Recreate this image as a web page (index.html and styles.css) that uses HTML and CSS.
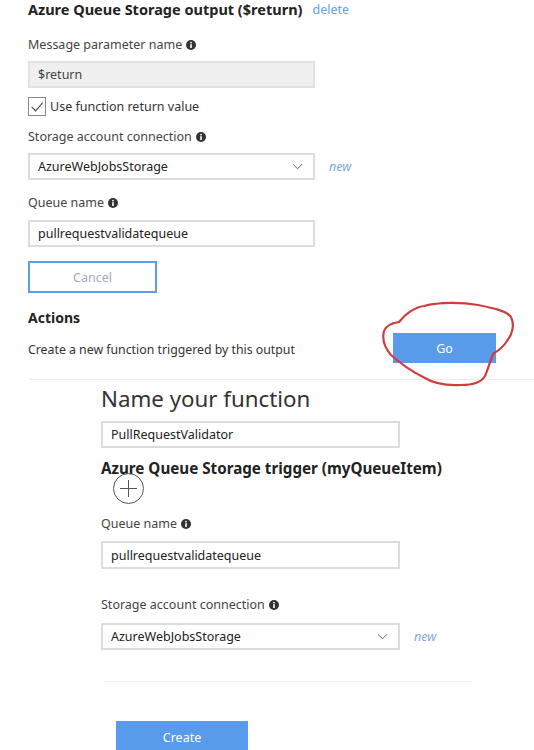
FILE: index.html
```html
<!DOCTYPE html>
<html>
<head>
<meta charset="utf-8">
<link rel="stylesheet" href="styles.css">
</head>
<body>
<section class="output">
  <div class="head"><h2 class="title">Azure Queue Storage output ($return)</h2><a class="link del">delete</a></div>
  <div class="lbl l-msg">Message parameter name <svg class="info" viewBox="0 0 10 10"><circle cx="5" cy="5" r="5" fill="#333"/><rect x="4.2" y="4.2" width="1.6" height="3.8" fill="#fff"/><circle cx="5" cy="2.6" r="0.9" fill="#fff"/></svg></div>
  <div class="field disabled f-msg">$return</div>
  <div class="check"><span class="box"><svg viewBox="0 0 18 19"><path d="M3 10 L7.5 14.5 L15.5 5" fill="none" stroke="#444" stroke-width="1.2"/></svg></span>Use function return value</div>
  <div class="lbl l-conn">Storage account connection <svg class="info" viewBox="0 0 10 10"><circle cx="5" cy="5" r="5" fill="#333"/><rect x="4.2" y="4.2" width="1.6" height="3.8" fill="#fff"/><circle cx="5" cy="2.6" r="0.9" fill="#fff"/></svg></div>
  <div class="selrow s-top">
    <div class="field select">AzureWebJobsStorage<svg class="chev" viewBox="0 0 12 7"><path d="M1 1 L6 6 L11 1" fill="none" stroke="#555" stroke-width="1"/></svg></div>
    <a class="link new">new</a>
  </div>
  <div class="lbl l-queue">Queue name <svg class="info" viewBox="0 0 10 10"><circle cx="5" cy="5" r="5" fill="#333"/><rect x="4.2" y="4.2" width="1.6" height="3.8" fill="#fff"/><circle cx="5" cy="2.6" r="0.9" fill="#fff"/></svg></div>
  <div class="field f-queue">pullrequestvalidatequeue</div>
  <button class="cancel">Cancel</button>
  <h3 class="actions">Actions</h3>
  <div class="actrow">
    <span class="acttext">Create a new function triggered by this output</span>
    <span class="gowrap">
      <button class="btn go">Go</button>
      <svg class="scribble" viewBox="0 0 150 100"><path d="M18 25 C24 17 34 10 43 9 C58 5 80 5 97 8 C112 11 126 14 130 20 C134 28 131 38 126 44 C122 50 117 54 113 56 C110 60 108 70 104 79 C100 86 92 88 80 88 C66 89 52 86 42 80 C32 75 20 67 10 58 C3 50 1 42 3 34 C5 28 11 26 18 25 Z" fill="none" stroke="#cf3d3d" stroke-width="2.2" stroke-linejoin="round"/></svg>
    </span>
  </div>
  <hr class="rule top-rule">
</section>
<section class="create">
  <h1 class="name">Name your function</h1>
  <div class="field wide f-name">PullRequestValidator</div>
  <h2 class="title trig">Azure Queue Storage trigger (myQueueItem)</h2>
  <div class="plus"><svg viewBox="0 0 31 31"><circle cx="15.5" cy="15.5" r="15" fill="none" stroke="#555" stroke-width="1"/><path d="M15.5 7 V24 M7 15.5 H24" stroke="#555" stroke-width="1"/></svg></div>
  <div class="lbl l-q2">Queue name <svg class="info" viewBox="0 0 10 10"><circle cx="5" cy="5" r="5" fill="#333"/><rect x="4.2" y="4.2" width="1.6" height="3.8" fill="#fff"/><circle cx="5" cy="2.6" r="0.9" fill="#fff"/></svg></div>
  <div class="field wide f-q2">pullrequestvalidatequeue</div>
  <div class="lbl l-c2">Storage account connection <svg class="info" viewBox="0 0 10 10"><circle cx="5" cy="5" r="5" fill="#333"/><rect x="4.2" y="4.2" width="1.6" height="3.8" fill="#fff"/><circle cx="5" cy="2.6" r="0.9" fill="#fff"/></svg></div>
  <div class="selrow s-bot">
    <div class="field select wide">AzureWebJobsStorage<svg class="chev" viewBox="0 0 12 7"><path d="M1 1 L6 6 L11 1" fill="none" stroke="#555" stroke-width="1"/></svg></div>
    <a class="link new">new</a>
  </div>
  <hr class="rule bot-rule">
  <button class="btn createbtn">Create</button>
</section>
</body>
</html>
```
FILE: styles.css
```css
html, body {
  margin: 0;
  padding: 0;
  background: #fff;
}
body {
  font-family: "Noto Sans", "Open Sans", sans-serif;
  font-size: 12.5px;
  color: #333;
  width: 534px;
  height: 750px;
  overflow: hidden;
}
.output {
  padding-left: 28px;
}
.head {
  display: flex;
  align-items: center;
  height: 18px;
  gap: 10px;
}
.title {
  margin: 0;
  font-size: 14.5px;
  font-weight: 700;
  line-height: 18px;
  color: #222;
}
.link {
  color: #6aa0dc;
  font-size: 12.5px;
}
.lbl {
  display: flex;
  align-items: center;
  gap: 4px;
  height: 18px;
  line-height: 18px;
  color: #444;
}
.info {
  width: 10px;
  height: 10px;
}
.field {
  box-sizing: border-box;
  width: 287px;
  height: 27px;
  border: 2px solid #dcdcdc;
  padding: 0 8px;
  display: flex;
  align-items: center;
  color: #222;
}
.field.wide {
  width: 299px;
}
.disabled {
  background: #efefef;
  border-color: #e2e2e2;
  color: #444;
}
.l-msg { margin-top: 18px; }
.f-msg { margin-top: 7px; }
.check {
  margin-top: 9px;
  display: flex;
  align-items: center;
  gap: 4px;
  height: 19px;
  color: #333;
}
.box {
  box-sizing: border-box;
  width: 18px;
  height: 19px;
  border: 1px solid #8a8a8a;
  display: flex;
}
.box svg {
  width: 16px;
  height: 17px;
}
.l-conn { margin-top: 12px; }
.selrow {
  display: flex;
  align-items: center;
  gap: 14px;
}
.s-top { margin-top: 7px; }
.select {
  justify-content: space-between;
}
.chev {
  width: 11px;
  height: 7px;
  margin-right: 2px;
}
.new {
  font-style: italic;
  color: #7ea8da;
}
.l-queue { margin-top: 14px; }
.f-queue { margin-top: 8px; }
.cancel {
  display: block;
  margin-top: 14px;
  box-sizing: border-box;
  width: 129px;
  height: 32px;
  background: #fff;
  border: 2px solid #5c9ce8;
  font-family: inherit;
  font-size: 12.5px;
  color: #a3abb9;
  padding: 0;
}
.actions {
  margin: 16px 0 0;
  font-size: 14px;
  font-weight: 700;
  line-height: 18px;
  color: #222;
}
.actrow {
  margin-top: 6px;
  width: 468px;
  height: 30px;
  display: flex;
  align-items: center;
  justify-content: space-between;
}
.acttext {
  padding-top: 3px;
  font-size: 12.3px;
  color: #333;
}
.gowrap {
  position: relative;
  display: flex;
}
.btn {
  box-sizing: border-box;
  border: 0;
  background: #589bea;
  color: #fff;
  font-family: inherit;
  font-size: 12.5px;
  padding: 0;
}
.go {
  width: 103px;
  height: 30px;
}
.scribble {
  position: absolute;
  left: -12px;
  top: -36px;
  width: 150px;
  height: 100px;
  pointer-events: none;
}
.rule {
  border: 0;
  height: 1px;
  background: #ececec;
  margin: 0;
}
.top-rule {
  margin-top: 16px;
  margin-left: 1px;
}
.create {
  padding-left: 101px;
}
.name {
  margin: 5px 0 0;
  font-size: 22.3px;
  font-weight: 400;
  line-height: 28px;
  color: #333;
}
.f-name { margin-top: 8px; }
.trig { margin-top: 11px; font-size: 15.2px; }
.plus {
  margin-top: -4px;
  margin-left: 12px;
  width: 31px;
  height: 31px;
  position: relative;
}
.plus svg {
  width: 31px;
  height: 31px;
  display: block;
}
.l-q2 { margin-top: 11px; }
.f-q2 { margin-top: 8px; height: 28px; }
.l-c2 { margin-top: 27px; }
.s-bot { margin-top: 9px; }
.bot-rule {
  margin-top: 31px;
  margin-left: 3px;
  width: 368px;
}
.createbtn {
  display: block;
  margin-top: 39px;
  margin-left: 15px;
  width: 132px;
  height: 32px;
}
```
